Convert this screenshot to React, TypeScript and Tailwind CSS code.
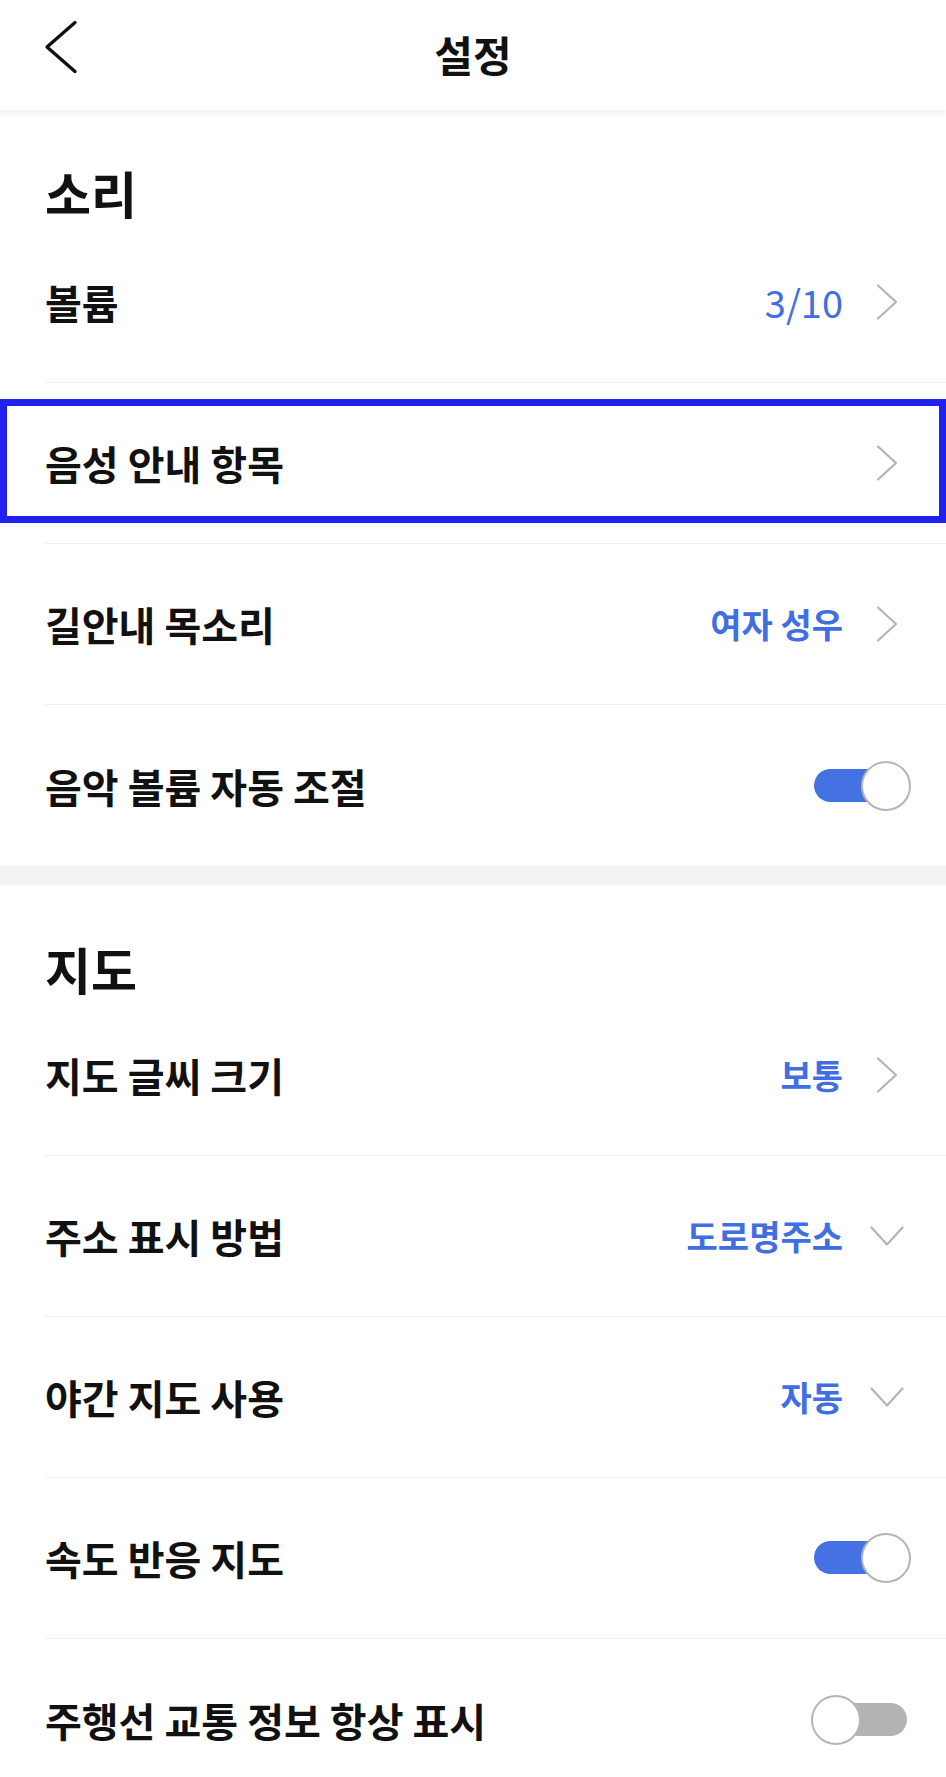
import clsx from 'clsx';

type Row = {
  label: string;
  value?: string;
  icon?: 'right' | 'down';
  toggle?: boolean;
  highlight?: boolean;
};

const sections: { title: string; rows: Row[] }[] = [
  {
    title: '소리',
    rows: [
      { label: '볼륨', value: '3/10', icon: 'right' },
      { label: '음성 안내 항목', icon: 'right', highlight: true },
      { label: '길안내 목소리', value: '여자 성우', icon: 'right' },
      { label: '음악 볼륨 자동 조절', toggle: true },
    ],
  },
  {
    title: '지도',
    rows: [
      { label: '지도 글씨 크기', value: '보통', icon: 'right' },
      { label: '주소 표시 방법', value: '도로명주소', icon: 'down' },
      { label: '야간 지도 사용', value: '자동', icon: 'down' },
      { label: '속도 반응 지도', toggle: true },
      { label: '주행선 교통 정보 항상 표시', toggle: false },
    ],
  },
];

const ChevronRight = () => (
  <svg width="34" height="36" viewBox="0 0 34 36" fill="none">
    <path d="M8 1.5 L26 18 L8 34.5" stroke="#b4b4b4" strokeWidth="2.2" strokeLinecap="round" strokeLinejoin="round" />
  </svg>
);

const ChevronDown = () => (
  <svg width="34" height="20" viewBox="0 0 34 20" fill="none">
    <path d="M1.5 1.5 L17 18.5 L32.5 1.5" stroke="#b4b4b4" strokeWidth="2.2" strokeLinecap="round" strokeLinejoin="round" />
  </svg>
);

const Toggle = ({ on }: { on: boolean }) => (
  <div className="relative h-[50px] w-[100px]">
    <div
      className={clsx(
        'absolute top-[8px] h-[33px] rounded-full',
        on ? 'left-[3px] right-[12px] bg-[#4472e2]' : 'left-[12px] right-[4px] bg-[#b3b3b3]'
      )}
    />
    <div
      className={clsx(
        'absolute top-0 h-[50px] w-[50px] rounded-full border-[2.5px] border-[#b5b5b5] bg-white',
        on ? 'right-0' : 'left-0'
      )}
    />
  </div>
);

const SettingRow = ({ row, last }: { row: Row; last: boolean }) => (
  <div className="relative">
    <div
      className={clsx(
        'ml-[45px] flex h-[161px] items-center justify-between pr-[35px]',
        !last && 'border-b border-[#efefef]'
      )}
    >
      <span className="text-[40px] leading-[48px] font-semibold text-[#111]">{row.label}</span>
      {row.toggle !== undefined ? (
        <Toggle on={row.toggle} />
      ) : (
        <div className="flex items-center gap-[27px] pr-[7px]">
          {row.value ? (
            row.value === '3/10' ? (
              <span className="text-[38px] leading-[44px] font-normal text-[#416ee0]">{row.value}</span>
            ) : (
              <span className="text-[34px] leading-[44px] font-semibold text-[#416ee0]">{row.value}</span>
            )
          ) : null}
          <div className="flex w-[34px] justify-center">
            {row.icon === 'down' ? <ChevronDown /> : <ChevronRight />}
          </div>
        </div>
      )}
    </div>
    {row.highlight ? (
      <div className="pointer-events-none absolute top-[16px] bottom-[21px] left-0 right-0 border-[7px] border-[#2020f0]" />
    ) : null}
  </div>
);

const App = () => {
  return (
    <div className="min-h-screen w-full overflow-hidden bg-white font-['Noto_Sans_CJK_KR','Noto_Sans',sans-serif] text-[#111]">
      <header className="relative z-10 flex h-[110px] items-center justify-center bg-white shadow-[0_3px_7px_rgba(0,0,0,0.07)]">
        <button className="absolute left-[44px] top-[20px]" type="button">
          <svg width="34" height="54" viewBox="0 0 34 54" fill="none">
            <path d="M31 2.5 L3 27 L31 51.5" stroke="#111" strokeWidth="3.4" strokeLinecap="round" strokeLinejoin="round" />
          </svg>
        </button>
        <h1 className="-mt-[2px] text-[42px] leading-[48px] font-bold">설정</h1>
      </header>

      {sections.map((section, si) => (
        <section key={section.title}>
          {si > 0 ? <div className="h-[19px] bg-[#f3f3f3]" /> : null}
          <div className={clsx('px-[45px]', si === 0 ? 'h-[112px] pt-[57px]' : 'h-[110px] pt-[58px]')}>
            <h2 className="text-[50px] leading-[50px] font-bold">{section.title}</h2>
          </div>
          {section.rows.map((row, ri) => (
            <SettingRow key={row.label} row={row} last={ri === section.rows.length - 1} />
          ))}
        </section>
      ))}
    </div>
  );
};

export default App;
